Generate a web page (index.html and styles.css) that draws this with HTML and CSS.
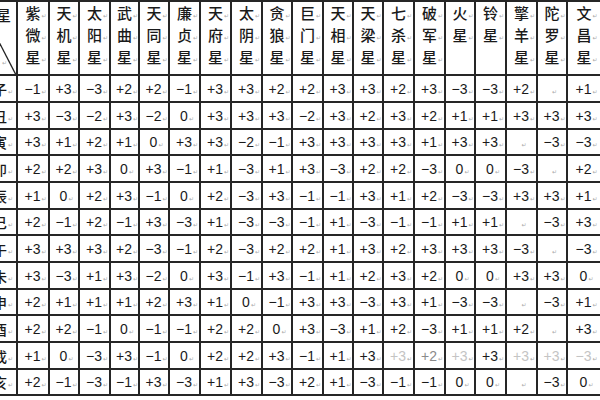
FILE: index.html
```html
<!DOCTYPE html>
<html lang="zh">
<head>
<meta charset="utf-8">
<title>星曜庙旺表</title>
<link rel="stylesheet" href="styles.css">
</head>
<body>
<div class="grid">
  <div class="h0"><span class="hs">星</span><svg class="diag" width="16" height="72" viewBox="0 0 16 72"><line x1="-1" y1="40" x2="16" y2="73" stroke="#222" stroke-width="1.3"/></svg><span class="hm"></span></div>
  <div class="h"><span>紫</span><span>微</span><span>星</span></div>
  <div class="h"><span>天</span><span>机</span><span>星</span></div>
  <div class="h"><span>太</span><span>阳</span><span>星</span></div>
  <div class="h"><span>武</span><span>曲</span><span>星</span></div>
  <div class="h"><span>天</span><span>同</span><span>星</span></div>
  <div class="h"><span>廉</span><span>贞</span><span>星</span></div>
  <div class="h"><span>天</span><span>府</span><span>星</span></div>
  <div class="h"><span>太</span><span>阴</span><span>星</span></div>
  <div class="h"><span>贪</span><span>狼</span><span>星</span></div>
  <div class="h"><span>巨</span><span>门</span><span>星</span></div>
  <div class="h"><span>天</span><span>相</span><span>星</span></div>
  <div class="h"><span>天</span><span>梁</span><span>星</span></div>
  <div class="h"><span>七</span><span>杀</span><span>星</span></div>
  <div class="h"><span>破</span><span>军</span><span>星</span></div>
  <div class="h"><span>火</span><span>星</span></div>
  <div class="h"><span>铃</span><span>星</span></div>
  <div class="h"><span>擎</span><span>羊</span><span>星</span></div>
  <div class="h"><span>陀</span><span>罗</span><span>星</span></div>
  <div class="h"><span>文</span><span>昌</span><span>星</span></div>

  <div class="c l">子</div><div class="c">−1</div><div class="c">+3</div><div class="c">−3</div><div class="c">+2</div><div class="c">+2</div><div class="c">−1</div><div class="c">+3</div><div class="c">+3</div><div class="c">+2</div><div class="c">+2</div><div class="c">+3</div><div class="c">+3</div><div class="c">+2</div><div class="c">+3</div><div class="c">−3</div><div class="c">−3</div><div class="c">+2</div><div class="c"></div><div class="c">+1</div>

  <div class="c l">丑</div><div class="c">+3</div><div class="c">−3</div><div class="c">−2</div><div class="c">+3</div><div class="c">−2</div><div class="c">0</div><div class="c">+3</div><div class="c">+3</div><div class="c">+3</div><div class="c">−2</div><div class="c">+3</div><div class="c">+2</div><div class="c">+3</div><div class="c">+2</div><div class="c">+1</div><div class="c">+1</div><div class="c">+3</div><div class="c">+3</div><div class="c">+3</div>

  <div class="c l">寅</div><div class="c">+3</div><div class="c">+1</div><div class="c">+2</div><div class="c">+1</div><div class="c">0</div><div class="c">+3</div><div class="c">+3</div><div class="c">−2</div><div class="c">−1</div><div class="c">+3</div><div class="c">+3</div><div class="c">+3</div><div class="c">+3</div><div class="c">+1</div><div class="c">+3</div><div class="c">+3</div><div class="c"></div><div class="c">−3</div><div class="c">−3</div>

  <div class="c l">卯</div><div class="c">+2</div><div class="c">+2</div><div class="c">+3</div><div class="c">0</div><div class="c">+3</div><div class="c">−1</div><div class="c">+1</div><div class="c">−3</div><div class="c">+1</div><div class="c">+3</div><div class="c">−3</div><div class="c">+2</div><div class="c">+2</div><div class="c">−3</div><div class="c">0</div><div class="c">0</div><div class="c">−3</div><div class="c"></div><div class="c">+2</div>

  <div class="c l">辰</div><div class="c">+1</div><div class="c">0</div><div class="c">+2</div><div class="c">+3</div><div class="c">−1</div><div class="c">0</div><div class="c">+2</div><div class="c">−3</div><div class="c">+3</div><div class="c">−1</div><div class="c">−1</div><div class="c">+3</div><div class="c">+1</div><div class="c">+2</div><div class="c">−3</div><div class="c">−3</div><div class="c">+3</div><div class="c">+3</div><div class="c">+1</div>

  <div class="c l">巳</div><div class="c">+2</div><div class="c">−1</div><div class="c">+2</div><div class="c">−1</div><div class="c">+3</div><div class="c">−3</div><div class="c">+1</div><div class="c">−3</div><div class="c">−3</div><div class="c">−1</div><div class="c">+1</div><div class="c">−3</div><div class="c">−1</div><div class="c">−1</div><div class="c">+1</div><div class="c">+1</div><div class="c"></div><div class="c">−3</div><div class="c">+3</div>

  <div class="c l">午</div><div class="c">+3</div><div class="c">+3</div><div class="c">+3</div><div class="c">+2</div><div class="c">−3</div><div class="c">−1</div><div class="c">+2</div><div class="c">−3</div><div class="c">+2</div><div class="c">+2</div><div class="c">+1</div><div class="c">+3</div><div class="c">+2</div><div class="c">+3</div><div class="c">+3</div><div class="c">+3</div><div class="c">−3</div><div class="c"></div><div class="c">−3</div>

  <div class="c l">未</div><div class="c">+3</div><div class="c">−3</div><div class="c">+1</div><div class="c">+3</div><div class="c">−2</div><div class="c">0</div><div class="c">+3</div><div class="c">−1</div><div class="c">+3</div><div class="c">−1</div><div class="c">+1</div><div class="c">+2</div><div class="c">+3</div><div class="c">+2</div><div class="c">0</div><div class="c">0</div><div class="c">+3</div><div class="c">+3</div><div class="c">0</div>

  <div class="c l">申</div><div class="c">+2</div><div class="c">+1</div><div class="c">+1</div><div class="c">+1</div><div class="c">+2</div><div class="c">+3</div><div class="c">+1</div><div class="c">0</div><div class="c">−1</div><div class="c">+3</div><div class="c">+3</div><div class="c">−3</div><div class="c">+3</div><div class="c">+1</div><div class="c">−3</div><div class="c">−3</div><div class="c"></div><div class="c">−3</div><div class="c">+1</div>

  <div class="c l">酉</div><div class="c">+2</div><div class="c">+2</div><div class="c">−1</div><div class="c">0</div><div class="c">−1</div><div class="c">−1</div><div class="c">+2</div><div class="c">+2</div><div class="c">0</div><div class="c">+3</div><div class="c">−3</div><div class="c">+1</div><div class="c">+2</div><div class="c">−3</div><div class="c">+1</div><div class="c">+1</div><div class="c">+2</div><div class="c"></div><div class="c">+3</div>

  <div class="c l">戌</div><div class="c">+1</div><div class="c">0</div><div class="c">−3</div><div class="c">+3</div><div class="c">−1</div><div class="c">0</div><div class="c">+2</div><div class="c">+2</div><div class="c">+3</div><div class="c">−1</div><div class="c">+1</div><div class="c">+3</div><div class="c f">+3</div><div class="c f2">+2</div><div class="c f">+3</div><div class="c">+3</div><div class="c f">+3</div><div class="c f">+3</div><div class="c f">−3</div>

  <div class="c l">亥</div><div class="c">+2</div><div class="c">−1</div><div class="c">−3</div><div class="c">−1</div><div class="c">+3</div><div class="c">−3</div><div class="c">+1</div><div class="c">+3</div><div class="c">−3</div><div class="c">+2</div><div class="c">+1</div><div class="c">−3</div><div class="c">−1</div><div class="c">−1</div><div class="c">0</div><div class="c">0</div><div class="c"></div><div class="c">−3</div><div class="c">0</div>
</div>
</body>
</html>
```
FILE: styles.css
```css
html, body {
  margin: 0;
  padding: 0;
  background: #fff;
  overflow: hidden;
}
.grid {
  width: 600px;
  display: grid;
  grid-template-columns: 16px 30px 28px 29px 27px 28px 29px 29px 29px 28px 29px 28px 28px 29px 29px 28px 29px 29px 28px 32px;
  grid-template-rows: 72px repeat(4, 25px 25px 24px);
  gap: 2px;
  padding: 2px 0;
  background: #262626;
}
.h, .h0, .c {
  background: #fff;
  color: #1a1a1a;
}
.h {
  display: flex;
  flex-direction: column;
  align-items: center;
  font-family: "Noto Sans CJK SC", sans-serif;
  font-size: 15px;
  font-weight: 500;
  line-height: 22px;
}
.h span {
  position: relative;
}
.h span::after,
.hm::after,
.c::after {
  content: "↵";
  position: absolute;
  font-family: "DejaVu Sans", sans-serif;
  font-size: 6px;
  line-height: 1;
  color: #aaa;
}
.h span::after {
  right: -6px;
  bottom: 5px;
}
.h0 {
  position: relative;
  overflow: hidden;
  font-family: "Noto Sans CJK SC", sans-serif;
  font-size: 15px;
  font-weight: 500;
  line-height: 22px;
}
.hs {
  position: absolute;
  right: 5px;
  top: 2px;
}
.hm {
  position: absolute;
  left: 2px;
  top: 58px;
}
.diag {
  position: absolute;
  left: 0;
  top: 0;
}
.c {
  position: relative;
  display: flex;
  align-items: center;
  justify-content: center;
  font-family: "Liberation Sans", Arial, sans-serif;
  font-size: 14px;
  white-space: nowrap;
}
.c::after {
  position: relative;
  width: 0;
  margin-left: 1px;
  top: 3px;
}
.c:empty::after {
  margin-left: 0;
}
.l {
  justify-content: flex-end;
  overflow: hidden;
  font-family: "Noto Sans CJK SC", sans-serif;
  font-size: 14px;
  font-weight: 500;
  padding-right: 3px;
}
.l::after {
  width: auto;
  margin-left: 1px;
}
.f {
  color: #c4c4c4;
}
.f2 {
  color: #8a8a8a;
}
```
